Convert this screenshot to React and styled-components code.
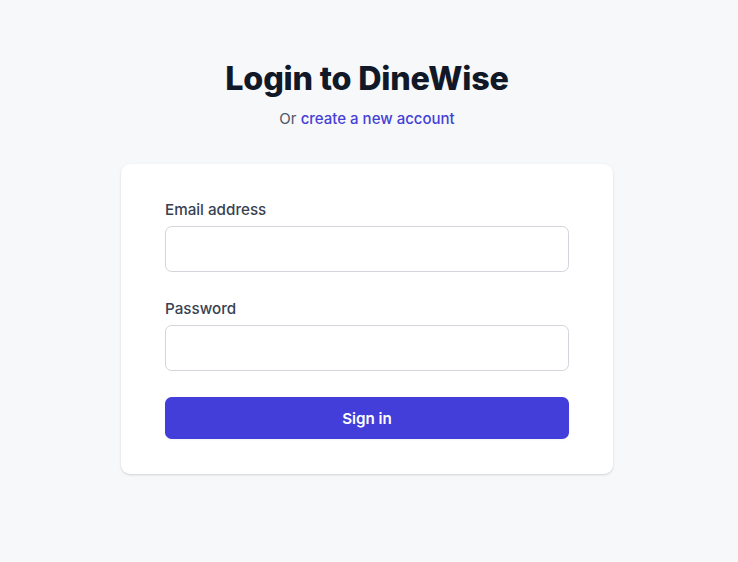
import React from "react";
import styled, { createGlobalStyle } from "styled-components";

const Global = createGlobalStyle`
  html, body { margin: 0; padding: 0; background: #f7f8fa; }
  body { font-family: Inter, "Noto Sans", Arial, sans-serif; -webkit-font-smoothing: antialiased; }
  * { box-sizing: border-box; }
`;

const Page = styled.div`
  min-height: 562px;
  display: flex;
  flex-direction: column;
  align-items: center;
  padding: 59px 4px 0 0;
  background: #f7f8fa;
`;

const Title = styled.h2`
  margin: 0;
  font-size: 32.3px;
  line-height: 40px;
  font-weight: 800;
  color: #111827;
  letter-spacing: -0.2px;
  text-align: center;
`;

const Sub = styled.p`
  margin: 9px 0 0;
  font-size: 15px;
  line-height: 22px;
  color: #4b5563;
  text-align: center;
`;

const Link = styled.a`
  color: #4540d6;
  font-weight: 500;
  text-decoration: none;
`;

const Card = styled.div`
  margin-top: 34px;
  width: 492px;
  background: #fff;
  border-radius: 9px;
  box-shadow: 0 1px 3px rgba(0, 0, 0, 0.1), 0 1px 2px rgba(0, 0, 0, 0.06);
  padding: 35px 44px 35px;
`;

const Form = styled.form`
  display: flex;
  flex-direction: column;
  gap: 26px;
`;

const Field = styled.div`
  display: flex;
  flex-direction: column;
`;

const Label = styled.label`
  font-size: 15.2px;
  line-height: 22px;
  font-weight: 500;
  color: #374151;
`;

const Input = styled.input`
  margin-top: 5px;
  height: 46px;
  width: 100%;
  border: 1px solid #d1d5db;
  border-radius: 6.6px;
  background: #fff;
  font-family: inherit;
  font-size: 15px;
  padding: 0 13px;
  outline: none;
`;

const Button = styled.button`
  height: 42px;
  width: 100%;
  border: none;
  border-radius: 6.6px;
  background: #433dd9;
  color: #fff;
  font-family: inherit;
  font-size: 15.2px;
  font-weight: 600;
  cursor: pointer;
  box-shadow: 0 1px 2px rgba(0, 0, 0, 0.05);
`;

export default function App() {
  return (
    <>
      <Global />
      <Page>
        <Title>Login to DineWise</Title>
        <Sub>
          Or <Link href="#">create a new account</Link>
        </Sub>
        <Card>
          <Form onSubmit={(e) => e.preventDefault()}>
            <Field>
              <Label htmlFor="email">Email address</Label>
              <Input id="email" type="email" />
            </Field>
            <Field>
              <Label htmlFor="password">Password</Label>
              <Input id="password" type="password" />
            </Field>
            <Button type="submit">Sign in</Button>
          </Form>
        </Card>
      </Page>
    </>
  );
}
